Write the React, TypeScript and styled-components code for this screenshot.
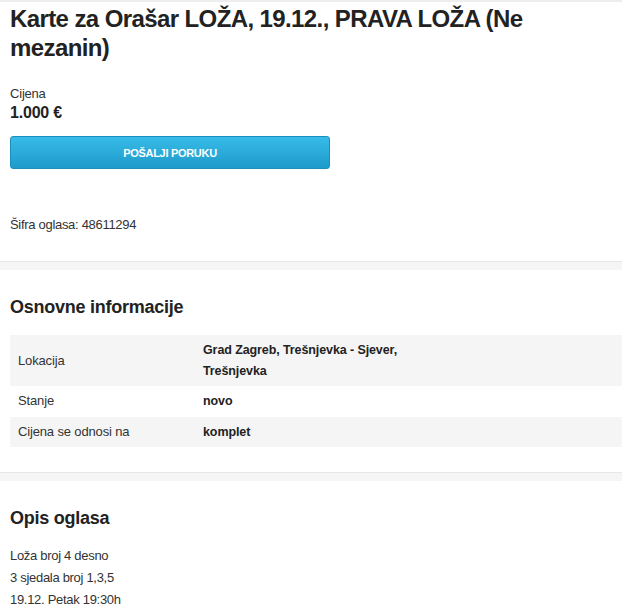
import styled, { createGlobalStyle } from "styled-components";

const GlobalStyle = createGlobalStyle`
  html, body {
    margin: 0;
    padding: 0;
    background: #fff;
  }
  body {
    font-family: "Liberation Sans", Arial, sans-serif;
    color: #222;
  }
`;

const info = [
  { label: "Lokacija", value: "Grad Zagreb, Trešnjevka - Sjever,\nTrešnjevka" },
  { label: "Stanje", value: "novo" },
  { label: "Cijena se odnosi na", value: "komplet" },
];

const description = ["Loža broj 4 desno", "3 sjedala broj 1,3,5", "19.12. Petak 19:30h"];

export default function App() {
  return (
    <>
      <GlobalStyle />
      <Page>
        <Section>
          <Title>Karte za Orašar LOŽA, 19.12., PRAVA LOŽA (Ne mezanin)</Title>
          <Price>
            <PriceLabel>Cijena</PriceLabel>
            <PriceValue>1.000 €</PriceValue>
          </Price>
          <SendButton>POŠALJI PORUKU</SendButton>
          <AdCode>Šifra oglasa: 48611294</AdCode>
        </Section>
        <Divider />
        <Section>
          <Heading>Osnovne informacije</Heading>
          <InfoTable>
            <tbody>
              {info.map((row, i) => (
                <InfoRow key={row.label} $striped={i % 2 === 0}>
                  <InfoLabel>{row.label}</InfoLabel>
                  <InfoValue>{row.value}</InfoValue>
                </InfoRow>
              ))}
            </tbody>
          </InfoTable>
        </Section>
        <Divider />
        <Section>
          <Heading $top={25}>Opis oglasa</Heading>
          <Description>
            {description.map((line) => (
              <DescLine key={line}>{line}</DescLine>
            ))}
          </Description>
        </Section>
      </Page>
    </>
  );
}

const Page = styled.div`
  border-top: 2px solid #eeeeee;
  width: 622px;
`;

const Section = styled.section`
  padding: 0 0 0 10px;
`;

const Title = styled.h1`
  margin: 0;
  padding-top: 2px;
  max-width: 560px;
  font-size: 24px;
  font-weight: 700;
  letter-spacing: -0.6px;
  line-height: 29px;
  color: #222;
`;

const Price = styled.div`
  margin-top: 23px;
`;

const PriceLabel = styled.div`
  font-size: 13px;
  letter-spacing: -0.2px;
  line-height: 17px;
  color: #333;
`;

const PriceValue = styled.div`
  font-size: 16px;
  font-weight: 700;
  letter-spacing: -0.2px;
  line-height: 21px;
  color: #222;
`;

const SendButton = styled.button`
  display: block;
  margin-top: 13px;
  width: 320px;
  height: 33px;
  border: 1px solid #1a8fbc;
  border-radius: 3px;
  background: linear-gradient(to bottom, #38bbe8 0%, #1d9bca 100%);
  color: #fff;
  font-family: "Liberation Sans", Arial, sans-serif;
  font-size: 11px;
  font-weight: 700;
  letter-spacing: -0.3px;
  cursor: pointer;
`;

const AdCode = styled.div`
  margin-top: 47px;
  padding-bottom: 28px;
  font-size: 13px;
  letter-spacing: -0.3px;
  line-height: 17px;
  color: #333;
`;

const Divider = styled.div`
  height: 8px;
  background: #f5f5f5;
  border-top: 1px solid #e8e8e8;
`;

const Heading = styled.h2<{ $top?: number }>`
  margin: 0;
  padding-top: ${({ $top }) => $top ?? 25}px;
  font-size: 18px;
  font-weight: 700;
  letter-spacing: -0.25px;
  line-height: 24px;
  color: #222;
`;

const InfoTable = styled.table`
  margin-top: 16px;
  width: 100%;
  border-collapse: collapse;
  margin-bottom: 25px;
`;

const InfoRow = styled.tr<{ $striped: boolean }>`
  background: ${({ $striped }) => ($striped ? "#f5f5f5" : "transparent")};
`;

const InfoLabel = styled.td`
  width: 185px;
  padding: 5px 0 5px 8px;
  font-size: 13px;
  letter-spacing: -0.15px;
  line-height: 20px;
  color: #333;
  vertical-align: middle;
`;

const InfoValue = styled.td`
  padding: 5px 0;
  font-size: 12.5px;
  font-weight: 700;
  letter-spacing: -0.1px;
  line-height: 20.5px;
  white-space: pre-line;
  color: #222;
`;

const Description = styled.div`
  margin-top: 15px;
`;

const DescLine = styled.div`
  font-size: 13px;
  letter-spacing: -0.3px;
  line-height: 22px;
  color: #333;
`;
